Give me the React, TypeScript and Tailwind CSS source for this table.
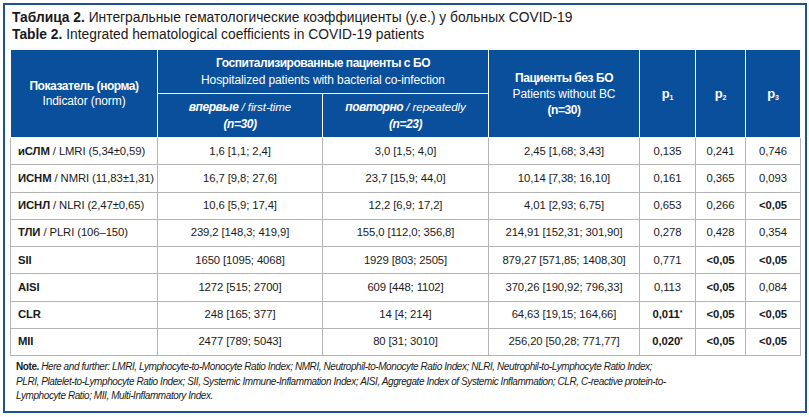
const COLS = [147, 165, 166, 151, 56, 50, 55];

type Row = {
  ru: string;
  en: string;
  a: string;
  b: string;
  c: string;
  p1: string;
  p2: string;
  p3: string;
  star1?: boolean;
};

const rows: Row[] = [
  { ru: "иСЛМ", en: " / LMRI (5,34±0,59)", a: "1,6 [1,1; 2,4]", b: "3,0 [1,5; 4,0]", c: "2,45 [1,68; 3,43]", p1: "0,135", p2: "0,241", p3: "0,746" },
  { ru: "ИСНМ", en: " / NMRI (11,83±1,31)", a: "16,7 [9,8; 27,6]", b: "23,7 [15,9; 44,0]", c: "10,14 [7,38; 16,10]", p1: "0,161", p2: "0,365", p3: "0,093" },
  { ru: "ИСНЛ", en: " / NLRI (2,47±0,65)", a: "10,6 [5,9; 17,4]", b: "12,2 [6,9; 17,2]", c: "4,01 [2,93; 6,75]", p1: "0,653", p2: "0,266", p3: "<0,05" },
  { ru: "ТЛИ", en: " / PLRI (106–150)", a: "239,2 [148,3; 419,9]", b: "155,0 [112,0; 356,8]", c: "214,91 [152,31; 301,90]", p1: "0,278", p2: "0,428", p3: "0,354" },
  { ru: "SII", en: "", a: "1650 [1095; 4068]", b: "1929 [803; 2505]", c: "879,27 [571,85; 1408,30]", p1: "0,771", p2: "<0,05", p3: "<0,05" },
  { ru: "AISI", en: "", a: "1272 [515; 2700]", b: "609 [448; 1102]", c: "370,26 [190,92; 796,33]", p1: "0,113", p2: "<0,05", p3: "0,084" },
  { ru: "CLR", en: "", a: "248 [165; 377]", b: "14 [4; 214]", c: "64,63 [19,15; 164,66]", p1: "0,011", p2: "<0,05", p3: "<0,05", star1: true },
  { ru: "MII", en: "", a: "2477 [789; 5043]", b: "80 [31; 3010]", c: "256,20 [50,28; 771,77]", p1: "0,020", p2: "<0,05", p3: "<0,05", star1: true },
];

function PVal({ v, star }: { v: string; star?: boolean }) {
  const bold = v.startsWith("<") || star;
  return (
    <span className={bold ? "font-bold" : ""}>
      {v}
      {star && <sup className="text-[7px]">*</sup>}
    </span>
  );
}

function PHead({ n }: { n: number }) {
  return (
    <span className="font-bold text-[13px]">
      p<sub className="text-[7px]">{n}</sub>
    </span>
  );
}

export default function App() {
  const hd = "border border-white bg-[#0a4f9c] text-white text-center align-middle";
  const td = "border border-[#b4b4b4] text-center align-middle";
  const hb = "font-bold text-[12px] tracking-[-0.45px]";
  const hr = "font-normal text-[12px]";
  return (
    <div className="ml-[3px] mt-[3px] h-[410px] w-[804px] border-2 border-[#1d5296] bg-white pl-[5px] pt-[4px] font-['Liberation_Sans',Arial,sans-serif] text-[#1a1a1a]">
      <div className="ml-[2px] text-[13.8px] leading-[17px]">
        <div>
          <b>Таблица 2.</b> Интегральные гематологические коэффициенты (у.е.) у больных COVID-19
        </div>
        <div>
          <b>Table 2.</b> Integrated hematological coefficients in COVID-19 patients
        </div>
      </div>

      <table className="mt-[6px] w-[790px] table-fixed border-collapse border border-[#b4b4b4] text-[11.3px] tracking-[-0.1px]">
        <colgroup>
          {COLS.map((w, i) => (
            <col key={i} style={{ width: w }} />
          ))}
        </colgroup>
        <thead>
          <tr className="h-[44px]">
            <th rowSpan={2} className={`${hd} leading-[15px]`}>
              <div className={hb}>Показатель (норма)</div>
              <div className={hr}>Indicator (norm)</div>
            </th>
            <th colSpan={2} className={`${hd} leading-[17px]`}>
              <div className={hb}>Госпитализированные пациенты с БО</div>
              <div className={hr}>Hospitalized patients with bacterial co-infection</div>
            </th>
            <th rowSpan={2} className={`${hd} leading-[16px]`}>
              <div className={hb}>Пациенты без БО</div>
              <div className={hr}>Patients without BC</div>
              <div className={hb}>(n=30)</div>
            </th>
            <th rowSpan={2} className={hd}>
              <PHead n={1} />
            </th>
            <th rowSpan={2} className={hd}>
              <PHead n={2} />
            </th>
            <th rowSpan={2} className={hd}>
              <PHead n={3} />
            </th>
          </tr>
          <tr className="h-[44px]">
            <th className={`${hd} italic leading-[17px]`}>
              <div>
                <span className={hb}>впервые</span>
                <span className="font-normal text-[11.6px]"> / first-time</span>
              </div>
              <div className={hb}>(n=30)</div>
            </th>
            <th className={`${hd} italic leading-[17px]`}>
              <div>
                <span className={hb}>повторно</span>
                <span className="font-normal text-[11.6px]"> / repeatedly</span>
              </div>
              <div className={hb}>(n=23)</div>
            </th>
          </tr>
        </thead>
        <tbody>
          {rows.map((r) => (
            <tr key={r.ru} className="h-[27.25px]">
              <td className="border border-[#b4b4b4] pl-[7px] text-left align-middle">
                <b>{r.ru}</b>
                {r.en}
              </td>
              <td className={td}>{r.a}</td>
              <td className={td}>{r.b}</td>
              <td className={td}>{r.c}</td>
              <td className={td}>
                <PVal v={r.p1} star={r.star1} />
              </td>
              <td className={td}>
                <PVal v={r.p2} />
              </td>
              <td className={td}>
                <PVal v={r.p3} />
              </td>
            </tr>
          ))}
        </tbody>
      </table>

      <p className="mt-[4px] pl-[6px] text-[10px] italic leading-[14.5px] tracking-[-0.42px]">
        <b className="not-italic">Note.</b> Here and further: LMRI, Lymphocyte-to-Monocyte Ratio Index; NMRI, Neutrophil-to-Monocyte Ratio Index; NLRI, Neutrophil-to-Lymphocyte Ratio Index;
        <br />
        PLRI, Platelet-to-Lymphocyte Ratio Index; SII, Systemic Immune-Inflammation Index; AISI, Aggregate Index of Systemic Inflammation; CLR, C-reactive protein-to-
        <br />
        Lymphocyte Ratio; MII, Multi-Inflammatory Index.
      </p>
    </div>
  );
}
